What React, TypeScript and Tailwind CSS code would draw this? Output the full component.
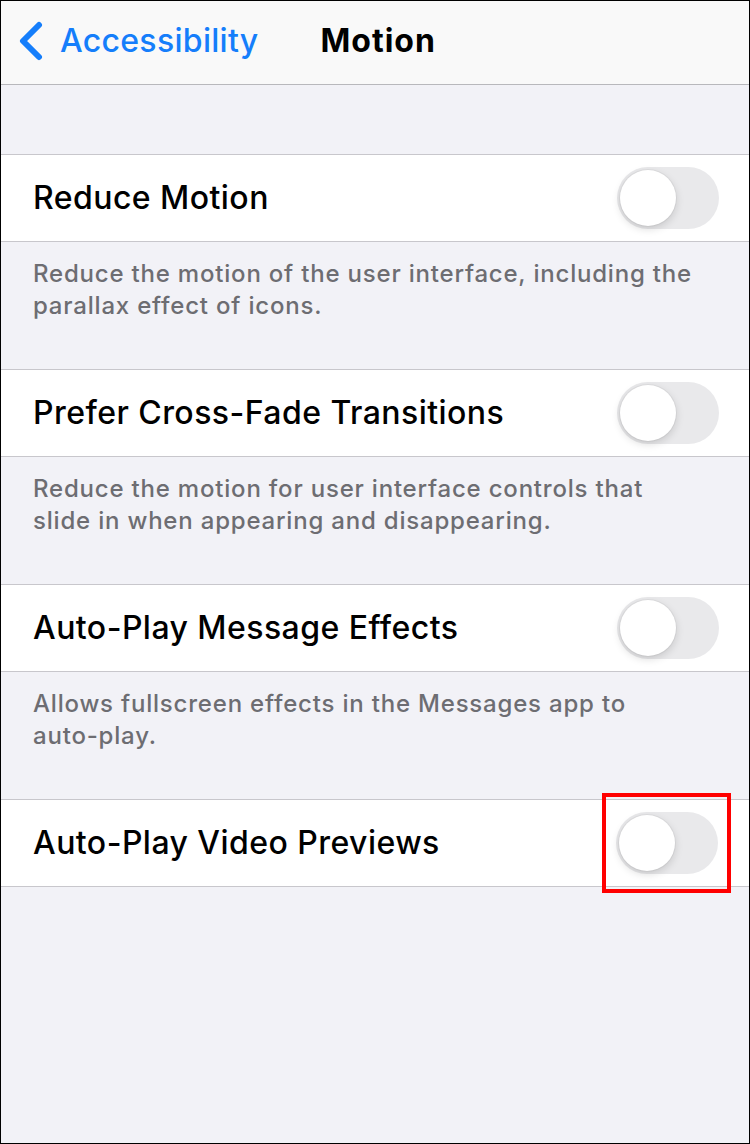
import React from 'react'

const font = { fontFamily: 'Inter, "Noto Sans", sans-serif' }

const sections = [
  {
    title: 'Reduce Motion',
    footer: <>Reduce the motion of the user interface, including the parallax effect of icons.</>,
  },
  {
    title: 'Prefer Cross-Fade Transitions',
    footer: <>Reduce the motion for user interface controls that slide in when appearing and disappearing.</>,
  },
  {
    title: 'Auto-Play Message Effects',
    footer: (
      <>
        Allows fullscreen effects in the Messages app to <span className="whitespace-nowrap">auto-play.</span>
      </>
    ),
  },
  {
    title: 'Auto-Play Video Previews',
    footer: null,
    highlight: true,
  },
]

function Toggle() {
  return (
    <div className="relative h-[62px] w-[102px] rounded-full bg-[#e9e9eb]">
      <div className="absolute left-[3px] top-[3px] h-[56px] w-[56px] rounded-full bg-white shadow-[0_3px_8px_rgba(0,0,0,0.15),0_0_0_1px_rgba(0,0,0,0.04)]" />
    </div>
  )
}

export default function App() {
  return (
    <div
      className="flex h-[1144px] w-[750px] flex-col overflow-hidden border border-black bg-[#f2f2f7]"
      style={font}
    >
      {/* nav bar */}
      <div className="flex h-[84px] shrink-0 items-center border-b border-[#b8b8bc] bg-[#f9f9f9] pb-[4px]">
        <div className="flex items-center pl-[17px]">
          <svg width="26" height="40" viewBox="0 0 26 40" fill="none">
            <path
              d="M21 4 L5 20 L21 36"
              stroke="#157efb"
              strokeWidth="6"
              strokeLinecap="round"
              strokeLinejoin="round"
            />
          </svg>
          <span className="ml-[16px] text-[32px] tracking-[0.3px] font-medium text-[#157efb]">Accessibility</span>
        </div>
        <span className="ml-[62px] text-[32px] font-bold tracking-[1px] text-black">Motion</span>
      </div>

      <div className="h-[69px] shrink-0" />

      {sections.map((s) => (
        <div key={s.title}>
          <div className="flex h-[88px] items-center justify-between border-y border-[#c8c7cc] bg-white pl-[32px] pr-[30px]">
            <span className="text-[32px] font-medium tracking-[0.45px] text-black">{s.title}</span>
            {s.highlight ? (
              <div className="-mr-[12px] flex h-[100px] w-[129px] items-center justify-center border-[4px] border-[#ff0000]">
                <Toggle />
              </div>
            ) : (
              <Toggle />
            )}
          </div>
          {s.footer && (
            <div className="h-[127px] pl-[32px] pr-[52px] pt-[16px]">
              <p className="text-[24px] font-medium leading-[32px] tracking-[0.8px] text-[#6d6d72]">{s.footer}</p>
            </div>
          )}
        </div>
      ))}
    </div>
  )
}
